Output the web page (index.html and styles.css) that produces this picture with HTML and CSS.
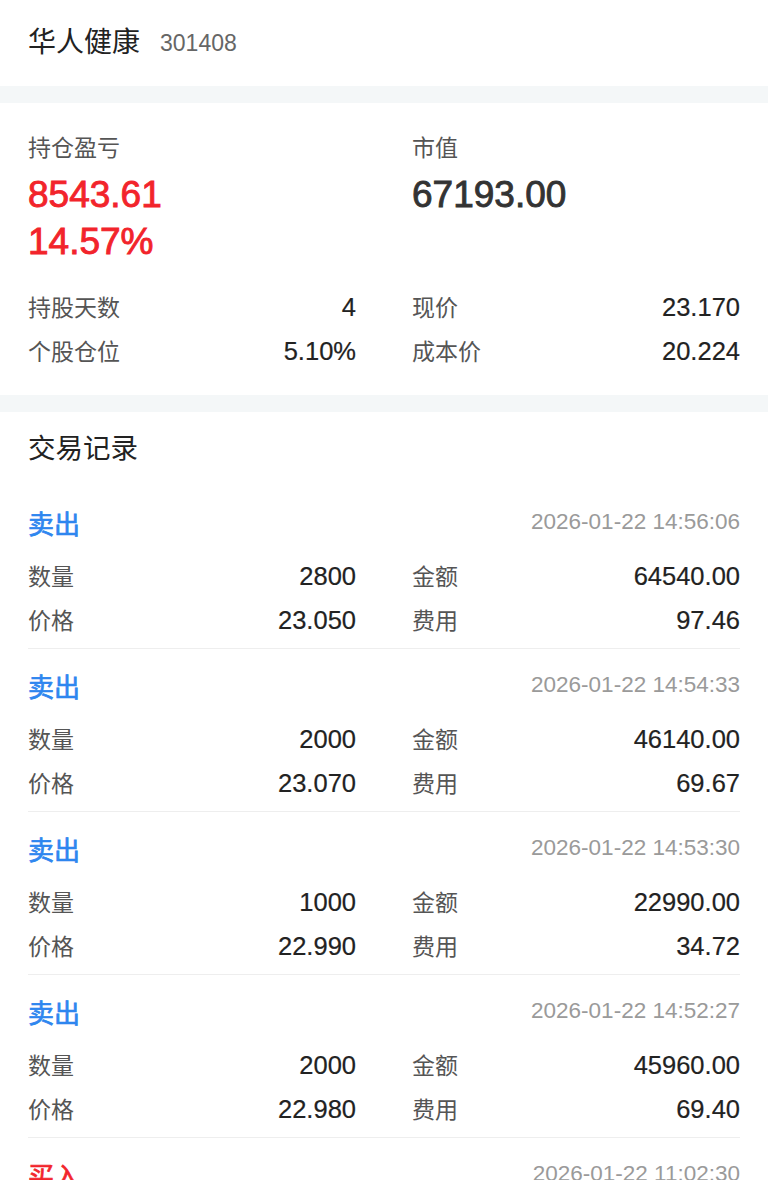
FILE: index.html
```html
<!DOCTYPE html>
<html lang="zh-CN">
<head>
<meta charset="utf-8">
<title>华人健康</title>
<link rel="stylesheet" href="styles.css">
</head>
<body>
<header class="head">
  <span class="name">华人健康</span>
  <span class="code">301408</span>
</header>

<section class="card summary">
  <div class="cols">
    <div class="col">
      <div class="label">持仓盈亏</div>
      <div class="big red">8543.61</div>
      <div class="big red">14.57%</div>
    </div>
    <div class="col">
      <div class="label">市值</div>
      <div class="big">67193.00</div>
    </div>
  </div>
  <div class="grid">
    <div class="kv"><span class="k">持股天数</span><span class="v">4</span></div>
    <div class="kv"><span class="k">现价</span><span class="v">23.170</span></div>
    <div class="kv"><span class="k">个股仓位</span><span class="v">5.10%</span></div>
    <div class="kv"><span class="k">成本价</span><span class="v">20.224</span></div>
  </div>
</section>

<section class="card trades">
  <h2 class="title">交易记录</h2>

  <div class="rec">
    <div class="rec-head"><span class="side sell">卖出</span><span class="time">2026-01-22 14:56:06</span></div>
    <div class="grid">
      <div class="kv"><span class="k">数量</span><span class="v">2800</span></div>
      <div class="kv"><span class="k">金额</span><span class="v">64540.00</span></div>
      <div class="kv"><span class="k">价格</span><span class="v">23.050</span></div>
      <div class="kv"><span class="k">费用</span><span class="v">97.46</span></div>
    </div>
  </div>

  <div class="rec">
    <div class="rec-head"><span class="side sell">卖出</span><span class="time">2026-01-22 14:54:33</span></div>
    <div class="grid">
      <div class="kv"><span class="k">数量</span><span class="v">2000</span></div>
      <div class="kv"><span class="k">金额</span><span class="v">46140.00</span></div>
      <div class="kv"><span class="k">价格</span><span class="v">23.070</span></div>
      <div class="kv"><span class="k">费用</span><span class="v">69.67</span></div>
    </div>
  </div>

  <div class="rec">
    <div class="rec-head"><span class="side sell">卖出</span><span class="time">2026-01-22 14:53:30</span></div>
    <div class="grid">
      <div class="kv"><span class="k">数量</span><span class="v">1000</span></div>
      <div class="kv"><span class="k">金额</span><span class="v">22990.00</span></div>
      <div class="kv"><span class="k">价格</span><span class="v">22.990</span></div>
      <div class="kv"><span class="k">费用</span><span class="v">34.72</span></div>
    </div>
  </div>

  <div class="rec">
    <div class="rec-head"><span class="side sell">卖出</span><span class="time">2026-01-22 14:52:27</span></div>
    <div class="grid">
      <div class="kv"><span class="k">数量</span><span class="v">2000</span></div>
      <div class="kv"><span class="k">金额</span><span class="v">45960.00</span></div>
      <div class="kv"><span class="k">价格</span><span class="v">22.980</span></div>
      <div class="kv"><span class="k">费用</span><span class="v">69.40</span></div>
    </div>
  </div>

  <div class="rec">
    <div class="rec-head"><span class="side buy">买入</span><span class="time">2026-01-22 11:02:30</span></div>
    <div class="grid">
      <div class="kv"><span class="k">数量</span><span class="v">2900</span></div>
      <div class="kv"><span class="k">金额</span><span class="v">58260.00</span></div>
      <div class="kv"><span class="k">价格</span><span class="v">20.090</span></div>
      <div class="kv"><span class="k">费用</span><span class="v">5.00</span></div>
    </div>
  </div>
</section>
</body>
</html>
```

FILE: styles.css
```css
html, body {
  margin: 0;
  padding: 0;
  background: #f4f7f8;
}
body {
  font-family: "Liberation Sans", "Noto Sans CJK SC", sans-serif;
  color: #333;
}
.head {
  background: #fff;
  height: 86px;
  display: flex;
  align-items: center;
  padding: 0 28px;
  box-sizing: border-box;
}
.name {
  font-size: 28px;
  color: #222;
  line-height: 1;
}
.code {
  font-size: 23px;
  color: #666;
  margin-left: 20px;
  line-height: 1;
}
.card {
  background: #fff;
  padding: 0 28px;
}
.summary {
  margin-top: 17px;
  padding-top: 30px;
  padding-bottom: 22px;
}
.cols {
  display: grid;
  grid-template-columns: 1fr 1fr;
  column-gap: 56px;
}
.label {
  font-size: 23px;
  line-height: 30px;
  color: #555;
  margin-bottom: 8px;
}
.big {
  font-size: 37px;
  line-height: 47px;
  font-weight: normal;
  -webkit-text-stroke: 0.9px currentColor;
  color: #333;
}
.red { color: #f2242b; }
.summary .grid { margin-top: 20px; }
.grid {
  display: grid;
  grid-template-columns: 1fr 1fr;
  column-gap: 56px;
}
.kv {
  display: flex;
  justify-content: space-between;
  align-items: center;
  height: 44px;
}
.k {
  font-size: 23px;
  color: #555;
  position: relative;
  top: -1px;
}
.v {
  font-size: 25.5px;
  color: #222;
  -webkit-text-stroke: 0.2px currentColor;
}
.trades {
  margin-top: 17px;
  padding-top: 15px;
}
.title {
  margin: 0 0 15px;
  font-size: 27.5px;
  font-weight: normal;
  line-height: 44px;
  color: #222;
}
.rec {
  padding-top: 14px;
  padding-bottom: 6px;
  border-bottom: 1px solid #eeeeee;
}
.rec-head {
  display: flex;
  justify-content: space-between;
  align-items: center;
  height: 44px;
  margin-bottom: 10px;
}
.side {
  font-size: 26px;
  font-weight: normal;
  -webkit-text-stroke: 0.7px currentColor;
}
.sell { color: #2e86ef; }
.buy { color: #f2242b; }
.time {
  font-size: 22.5px;
  color: #9a9a9a;
}
```
